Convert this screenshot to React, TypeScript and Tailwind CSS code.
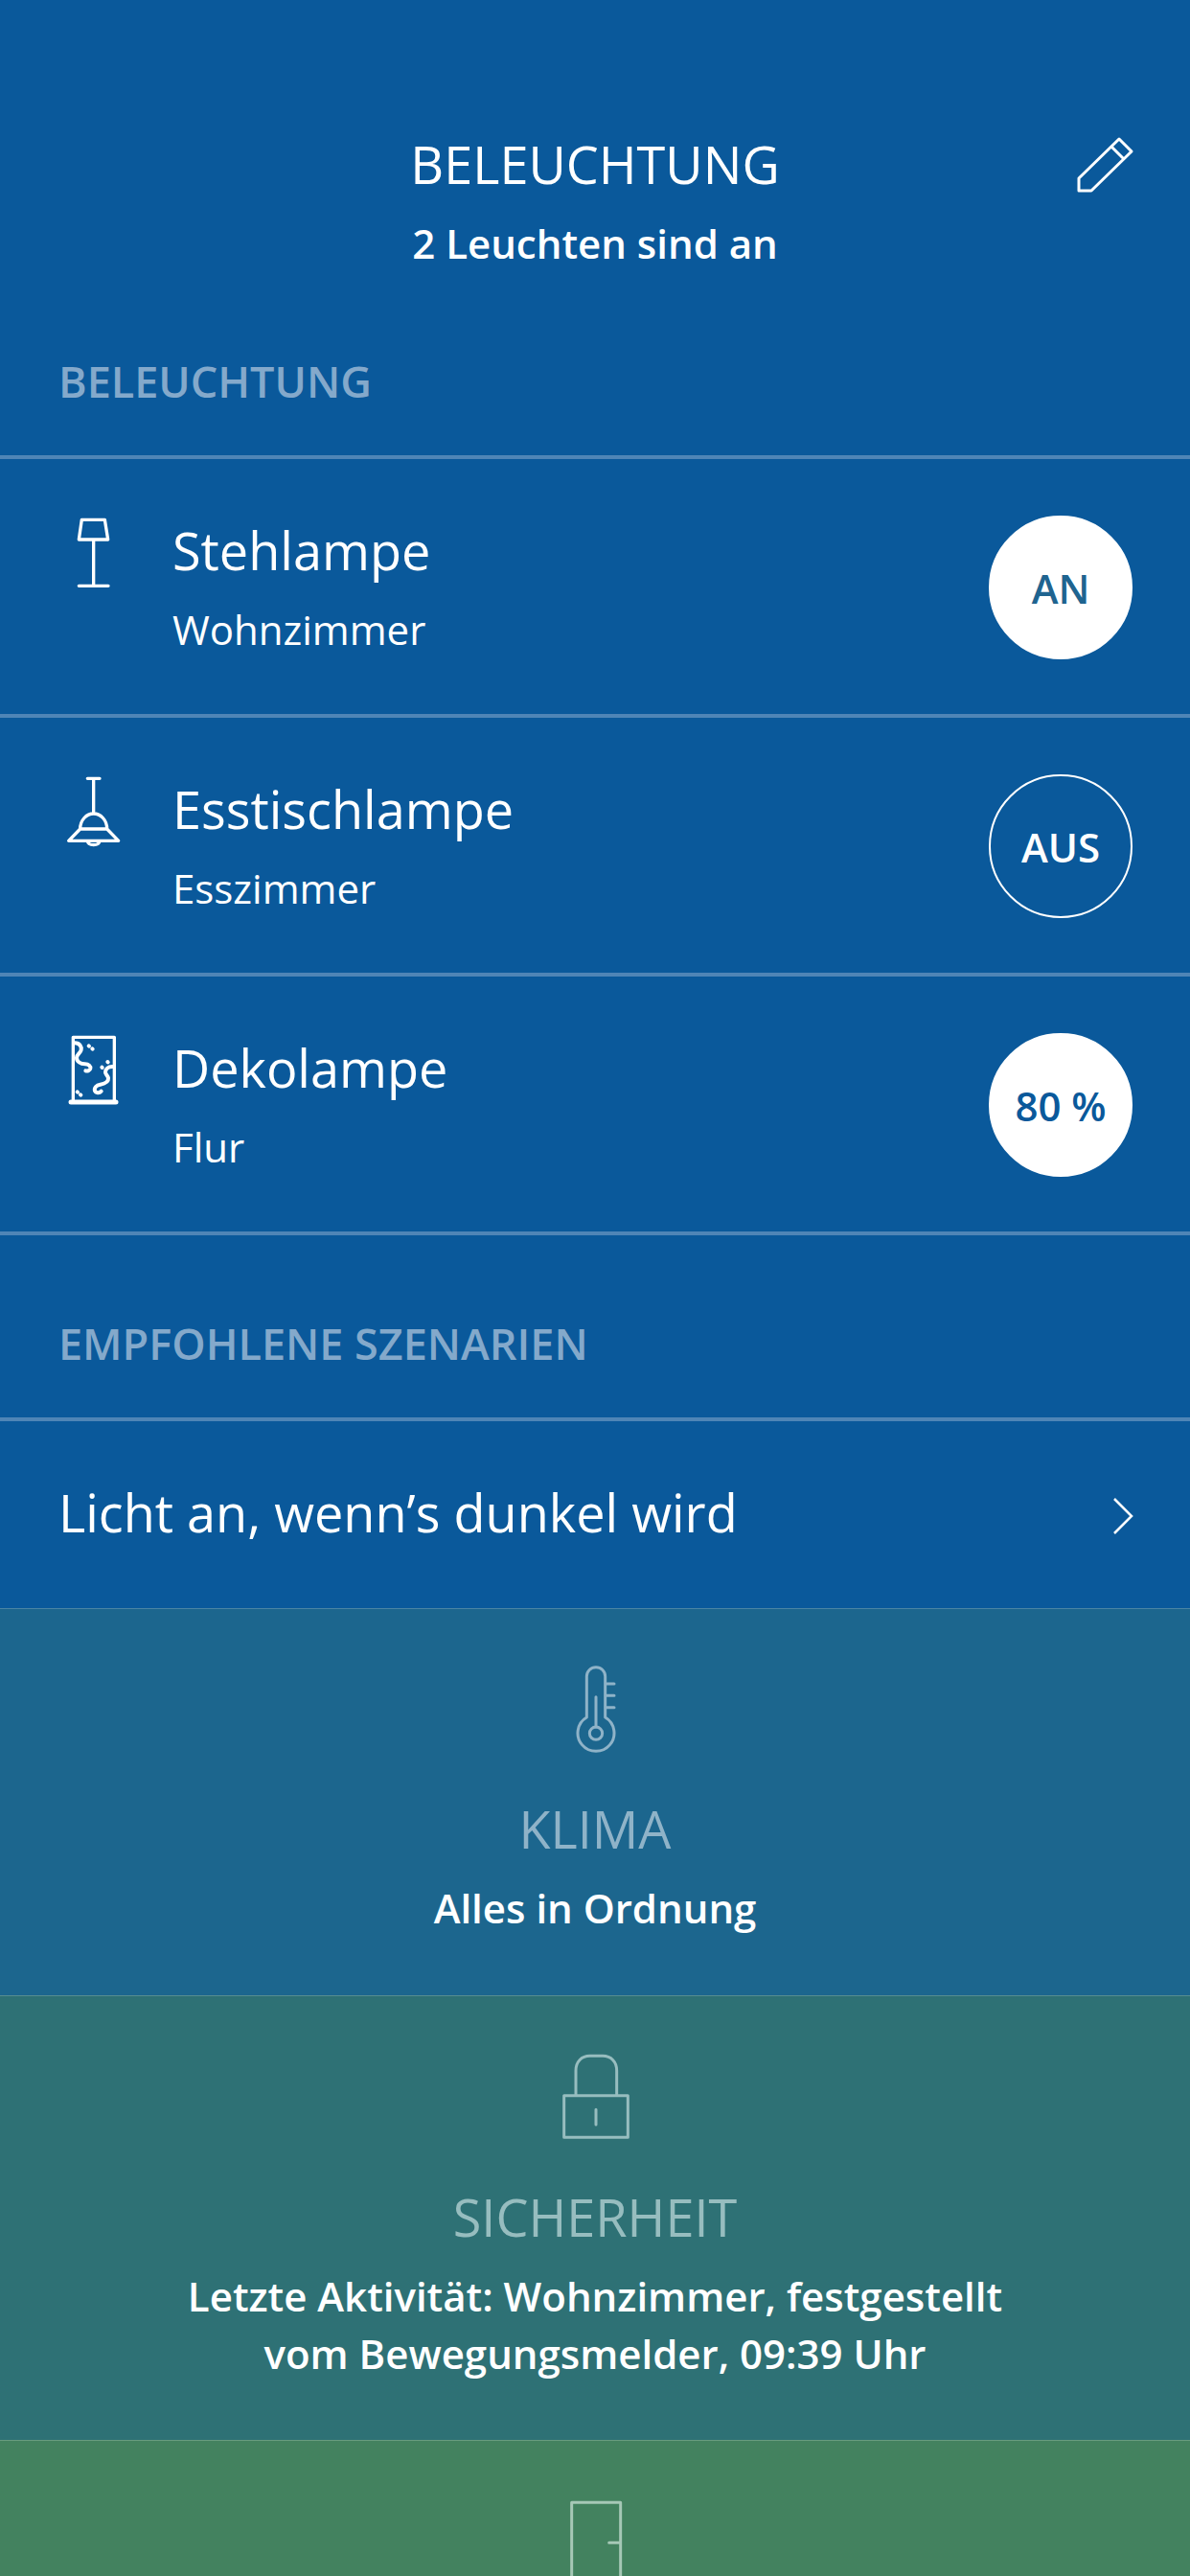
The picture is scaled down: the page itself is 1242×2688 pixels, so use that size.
import React from "react";

/** --- Icons, drawn on a 360 unit grid --- **/
const FloorLamp = () => (
  <svg width="120" height="120" viewBox="0 0 360 360" fill="none" stroke="#fff" strokeWidth="10" strokeLinecap="round" strokeLinejoin="round">
    <path d="M136 94h72l10 62H127zM173 158v142M127 301h92" />
  </svg>
);

const PendantLamp = () => (
  <svg width="120" height="120" viewBox="0 -30 360 360" fill="none" stroke="#fff" strokeWidth="10" strokeLinecap="round" strokeLinejoin="round">
    <path d="M154 64h38M173 64v110M131 222c0-28 20-48 42-48s42 20 42 48M131 222h84M131 222l-36 37h156l-36-37M154 260c2 16 36 16 38 0" />
  </svg>
);

const DecoLamp = () => (
  <svg width="120" height="120" viewBox="0 -30 360 360" fill="none" stroke="#fff" strokeLinecap="round" strokeLinejoin="round">
    <path d="M109 264V64h129v200" strokeWidth="10" />
    <path d="M102 267h141" strokeWidth="15" />
    <path d="M114 82c16 0 22 12 20 22-2 10-14 14-14 24 0 12 12 20 26 20 12 0 18 6 17 14-1 6-9 9-15 7" strokeWidth="12" />
    <path d="M232 156c-14 0-22 8-22 18 0 6 8 10 9 18 1 12-13 18-25 20-12 2-20 10-17 20 3 7 14 8 20 1" strokeWidth="12" />
    <path d="M158 91l1 1M169 100l1 1M199 158l1 1M217 141l1 1M122 235l1 1M132 244l1 1" strokeWidth="12" />
  </svg>
);

const Thermometer = () => (
  <svg width="120" height="120" viewBox="0 0 360 360" fill="none" stroke="#8fb3c8" strokeWidth="9" strokeLinecap="round" strokeLinejoin="round">
    <path d="M154 216V88a29 29 0 0 1 58 0v128a57 57 0 1 1-58 0z" />
    <circle cx="183" cy="266" r="20" />
    <path d="M183 246V152M214 111h26M214 148h26M214 185h26" />
  </svg>
);

const Padlock = () => (
  <svg width="120" height="120" viewBox="0 0 360 360" fill="none" stroke="#97bdbf" strokeWidth="9" strokeLinecap="round" strokeLinejoin="round">
    <path d="M83 170h200v131H83zM120 168V92c0-28 18-46 44-46h40c26 0 44 18 44 46v76M183 214v47" />
  </svg>
);

const Door = () => (
  <svg width="120" height="128" viewBox="0 0 360 384" fill="none" stroke="#a6c8b6" strokeWidth="9" strokeLinecap="round" strokeLinejoin="round">
    <path d="M107 400V154h153v246M224 280h36" />
  </svg>
);

const Pencil = () => (
  <svg width="100" height="100" viewBox="0 0 100 100" fill="none" stroke="#fff" strokeWidth="3" strokeLinejoin="round">
    <path d="M26 79V66L68 25l13 13-42 41zM60 33l13 13" />
  </svg>
);

const Chevron = () => (
  <svg width="22" height="40" viewBox="0 0 22 40" fill="none" stroke="#fff" strokeWidth="2.5">
    <path d="M2 2l18 18L2 38" />
  </svg>
);

const lights = [
  { name: "Stehlampe", room: "Wohnzimmer", icon: <FloorLamp />, state: "AN", on: true, color: "text-[#1f6490]" },
  { name: "Esstischlampe", room: "Esszimmer", icon: <PendantLamp />, state: "AUS", on: false, color: "text-white" },
  { name: "Dekolampe", room: "Flur", icon: <DecoLamp />, state: "80 %", on: true, color: "text-[#0a599b]" },
];

const SectionLabel: React.FC<{ children: React.ReactNode; className: string }> = ({ children, className }) => (
  <div className={`px-[61px] text-[45px] leading-[60px] font-semibold text-[#84a9cb] ${className}`}>{children}</div>
);

const Summary: React.FC<{ title: string; icon: React.ReactNode; bg: string; titleColor: string; box: string; titleGap: string; lines: string[] }> = ({ title, icon, bg, titleColor, box, titleGap, lines }) => (
  <div className={`flex flex-col items-center border-t border-white/20 ${bg} ${box}`}>
    {icon}
    <div className={`text-[54px] leading-[70px] ${titleGap} ${titleColor}`}>{title}</div>
    <div className="mt-[18px] text-center text-[42px] leading-[60px] font-semibold text-white">
      {lines.map(l => <div key={l}>{l}</div>)}
    </div>
  </div>
);

export default function App() {
  return (
    <div className="h-[2688px] w-[1242px] overflow-hidden bg-[#0a599b] font-['Open_Sans',sans-serif] text-white">
      <div className="relative flex flex-col items-center pt-[136px]">
        <div className="text-[54px] leading-[70px]">BELEUCHTUNG</div>
        <div className="mt-[18px] text-[42px] leading-[60px] font-semibold">2 Leuchten sind an</div>
        <div className="absolute top-[120px] left-[1100px]"><Pencil /></div>
      </div>

      <SectionLabel className="mt-[84px] pb-[47px]">BELEUCHTUNG</SectionLabel>
      <div className="border-t-4 border-[#4f85b6]">
        {lights.map(l => (
          <div key={l.name} className="flex h-[270px] items-start border-b-4 border-[#4f85b6] pr-[60px] pl-[40px]">
            <div className="mt-[32px]">{l.icon}</div>
            <div className="ml-[20px] flex-1 pt-[57px]">
              <div className="text-[54px] leading-[76px]">{l.name}</div>
              <div className="mt-[15px] text-[42px] leading-[60px]">{l.room}</div>
            </div>
            <div className={`mt-[59px] flex size-[150px] items-center justify-center rounded-full border-2 border-white text-[42px] font-semibold ${l.on ? "bg-white" : ""} ${l.color}`}>
              {l.state}
            </div>
          </div>
        ))}
      </div>

      <SectionLabel className="mt-[83px] pb-[47px]">EMPFOHLENE SZENARIEN</SectionLabel>
      <div className="flex h-[199px] items-center justify-between border-t-4 border-[#4f85b6] pr-[59px] pb-[4px] pl-[61px]">
        <div className="text-[54px]">Licht an, wenn’s dunkel wird</div>
        <div className="pt-[6px]"><Chevron /></div>
      </div>

      <Summary title="KLIMA" icon={<Thermometer />} bg="bg-[#1c668e]" titleColor="text-[#8fb3c8]" box="h-[404px] pt-[41px]" titleGap="mt-[33px]" lines={["Alles in Ordnung"]} />
      <Summary title="SICHERHEIT" icon={<Padlock />} bg="bg-[#2e7175]" titleColor="text-[#97bdbf]" box="h-[464px] pt-[47px]" titleGap="mt-[28px]" lines={["Letzte Aktivität: Wohnzimmer, festgestellt", "vom Bewegungsmelder, 09:39 Uhr"]} />
      <div className="flex h-[200px] flex-col items-center border-t border-white/20 bg-[#43825f] pt-[13px]">
        <Door />
      </div>
    </div>
  );
}
